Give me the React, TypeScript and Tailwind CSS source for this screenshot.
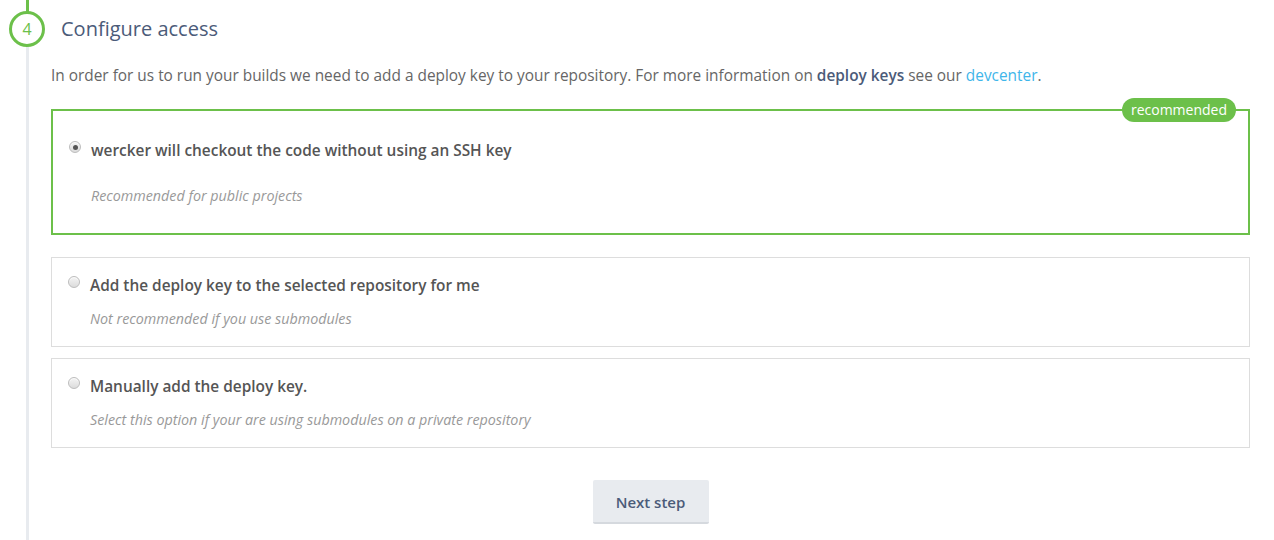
const options = [
  {
    title: "wercker will checkout the code without using an SSH key",
    hint: "Recommended for public projects",
    checked: true,
    recommended: true,
  },
  {
    title: "Add the deploy key to the selected repository for me",
    hint: "Not recommended if you use submodules",
    checked: false,
    recommended: false,
  },
  {
    title: "Manually add the deploy key.",
    hint: "Select this option if your are using submodules on a private repository",
    checked: false,
    recommended: false,
  },
];

function Radio({ checked }: { checked: boolean }) {
  return (
    <span className="flex h-[12px] w-[12px] shrink-0 items-center justify-center rounded-full border border-[#bdbdbd] bg-gradient-to-b from-[#f4f4f4] to-[#dcdcdc] shadow-[inset_0_1px_1px_rgba(255,255,255,0.8)]">
      {checked && <span className="h-[5px] w-[5px] rounded-full bg-[#555]" />}
    </span>
  );
}

export default function App() {
  return (
    <div
      className="relative h-[540px] w-[1274px] overflow-hidden bg-white"
      style={{ fontFamily: '"Open Sans", "Liberation Sans", sans-serif' }}
    >
      {/* timeline */}
      <div className="absolute left-[26px] top-0 h-full w-[3px] bg-[#e8ebef]" />
      <div className="absolute left-[26px] top-0 h-[12px] w-[3px] bg-[#6cc04a]" />

      <div className="relative flex items-center gap-[16px] pl-[9px] pt-[11px]">
        <div className="flex h-[36px] w-[36px] items-center justify-center rounded-full border-[3px] border-[#6cc04a] bg-white text-[16px] text-[#6cc04a]">
          4
        </div>
        <h3 className="text-[20px] text-[#4b5b79]">Configure access</h3>
      </div>

      <div className="relative pl-[51px] pr-[24px]">
        <p className="mt-[18px] text-[15.4px] leading-[21px] text-[#666]">
          In order for us to run your builds we need to add a deploy key to your repository. For more
          information on <strong className="font-semibold text-[#4b5b79]">deploy keys</strong> see our{" "}
          <a className="text-[#3fb6ea]">devcenter</a>.
        </p>

        <div className="mt-[23px] flex flex-col gap-[11px]">
          {options.map((o) => (
            <div
              key={o.title}
              className={
                o.recommended
                  ? "relative mb-[11px] h-[126px] border-2 border-[#6cc04a] px-[16px] pt-[30px]"
                  : "relative h-[90px] border border-[#dddddd] px-[16px] pt-[18px]"
              }
            >
              {o.recommended && (
                <span className="absolute right-[12px] top-[-13px] rounded-full bg-[#6cc04a] px-[9px] py-[2px] text-[14px] leading-[20px] text-white">
                  recommended
                </span>
              )}
              <div className="flex items-start gap-[10px]">
                <Radio checked={o.checked} />
                <div>
                  <div className="text-[15.4px] font-semibold leading-[20px] text-[#555]">{o.title}</div>
                  <div
                    className={
                      o.recommended
                        ? "mt-[24px] text-[14.3px] italic text-[#999]"
                        : "mt-[12px] text-[14.3px] italic text-[#999]"
                    }
                  >
                    {o.hint}
                  </div>
                </div>
              </div>
            </div>
          ))}
        </div>

        <div className="mt-[32px] flex justify-center">
          <button className="h-[44px] w-[116px] rounded-[2px] border-b-2 border-[#d5d9de] bg-[#e8ebef] pt-[2px] text-[15px] font-semibold text-[#4b5b79]">
            Next step
          </button>
        </div>
      </div>
    </div>
  );
}
